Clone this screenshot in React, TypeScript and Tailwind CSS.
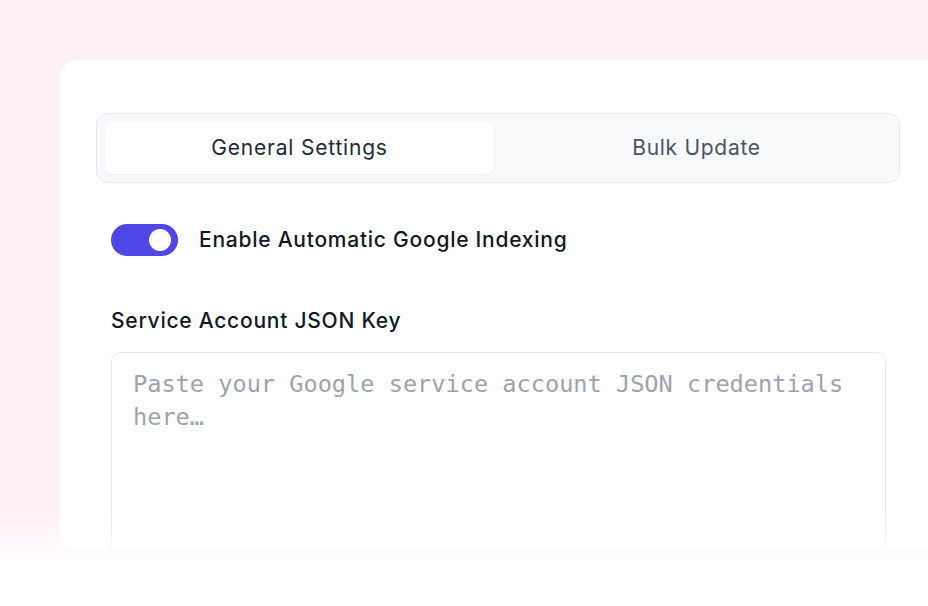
import React from "react";

export default function App() {
  return (
    <div className="relative w-[928px] h-[606px] overflow-hidden bg-white">
      {/* pink backdrop behind the settings card */}
      <div className="h-[560px] bg-[#fff0f3] pt-[60px] pl-[60px]">
        <div
          className="h-[490px] overflow-hidden bg-white rounded-tl-[18px] pl-[36px] pr-[28px] pt-[53px]"
          style={{ fontFamily: "Inter, 'Open Sans', sans-serif" }}
        >
          {/* tabs */}
          <div className="flex h-[70px] rounded-[12px] border border-[#e5e7eb] bg-[#f8f9fb] p-[8px] gap-[8px]">
            <button className="flex-1 rounded-[8px] bg-white shadow-[0_1px_2px_rgba(0,0,0,0.05)] text-[21px] tracking-[0.8px] text-[#1f2937] flex items-center justify-center">
              General Settings
            </button>
            <button className="flex-1 rounded-[8px] text-[21px] tracking-[0.7px] text-[#4b5563] flex items-center justify-center">
              Bulk Update
            </button>
          </div>

          {/* toggle */}
          <div className="flex items-center gap-[21px] mt-[41px] pl-[15px]">
            <div className="w-[67px] h-[32px] rounded-full bg-[#4f46e5] flex items-center justify-end pr-[7px]">
              <div className="w-[22px] h-[22px] rounded-full bg-white" />
            </div>
            <span className="text-[21px] tracking-[0.75px] text-[#111827] font-medium">
              Enable Automatic Google Indexing
            </span>
          </div>

          {/* json key */}
          <div className="pl-[15px] pr-[14px] mt-[50px]">
            <div className="text-[21px] tracking-[0.75px] text-[#111827] font-medium leading-[30px]">
              Service Account JSON Key
            </div>
            <div className="mt-[16px] h-[220px] rounded-[10px] border border-[#e5e7eb] px-[21px] pt-[15px]">
              <div
                className="text-[23.6px] leading-[33px] text-[#9ca3af]"
                style={{ fontFamily: "'DejaVu Sans Mono', monospace" }}
              >
                Paste your Google service account JSON credentials
                <br />
                here…
              </div>
            </div>
          </div>
        </div>
      </div>
      {/* soft fade to white along the bottom edge */}
      <div className="absolute left-0 right-0 top-[510px] h-[55px] bg-gradient-to-b from-transparent to-white" />
    </div>
  );
}
